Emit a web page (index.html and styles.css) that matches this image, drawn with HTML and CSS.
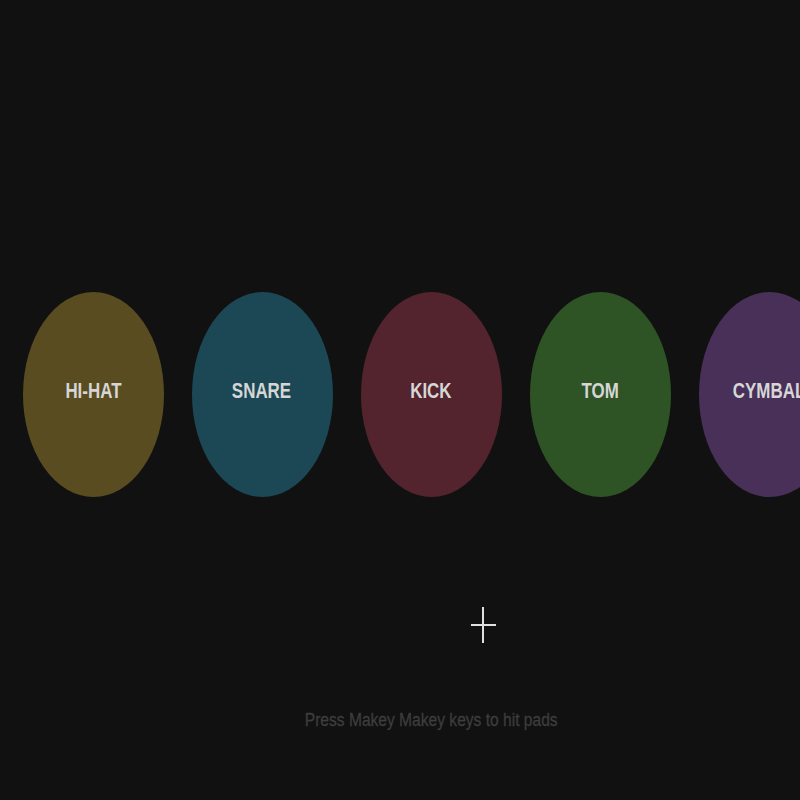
FILE: index.html
```html
<!DOCTYPE html>
<html>
<head>
<meta charset="utf-8">
<link rel="stylesheet" href="styles.css">
</head>
<body>
<main class="stage">
  <div class="pads">
    <div class="pad hihat"><span class="label">HI-HAT</span></div>
    <div class="pad snare"><span class="label">SNARE</span></div>
    <div class="pad kick"><span class="label">KICK</span></div>
    <div class="pad tom"><span class="label">TOM</span></div>
    <div class="pad cymbal"><span class="label">CYMBAL</span></div>
  </div>
  <p class="hint">Press Makey Makey keys to hit pads</p>
</main>
<div class="cursor"><span class="cv"></span><span class="ch"></span></div>
</body>
</html>
```
FILE: styles.css
```css
html, body {
  margin: 0;
  padding: 0;
  background: #111111;
  width: 800px;
  height: 800px;
  overflow: hidden;
}
.stage {
  width: 862px;
  display: flex;
  flex-direction: column;
  align-items: center;
  padding-top: 292px;
}
.pads {
  display: flex;
  gap: 28px;
  flex-shrink: 0;
}
.pad {
  width: 141px;
  height: 205px;
  border-radius: 50%;
  display: flex;
  align-items: center;
  justify-content: center;
  flex-shrink: 0;
}
.label {
  font-family: "Liberation Sans", Arial, sans-serif;
  font-weight: bold;
  font-size: 22px;
  color: #d6d6d6;
  transform: scaleX(0.77);
  white-space: nowrap;
  margin-top: -7px;
}
.hihat { background: #5a4c21; }
.snare { background: #1b4854; }
.kick { background: #54242e; }
.tom { background: #2e5425; }
.cymbal { background: #483058; }
.hint {
  margin: 212px 0 0 0;
  font-family: "Liberation Sans", Arial, sans-serif;
  font-size: 19px;
  color: #3d3d3d;
  transform: scaleX(0.82);
  white-space: nowrap;
  -webkit-text-stroke: 0.3px #3d3d3d;
}
.cursor {
  position: absolute;
  left: 471px;
  top: 607px;
  width: 25px;
  height: 36px;
}
.cv {
  position: absolute;
  left: 11px;
  top: 0;
  width: 2px;
  height: 36px;
  background: #e0e0e0;
}
.ch {
  position: absolute;
  left: 0;
  top: 17px;
  width: 25px;
  height: 2px;
  background: #e0e0e0;
}
```
